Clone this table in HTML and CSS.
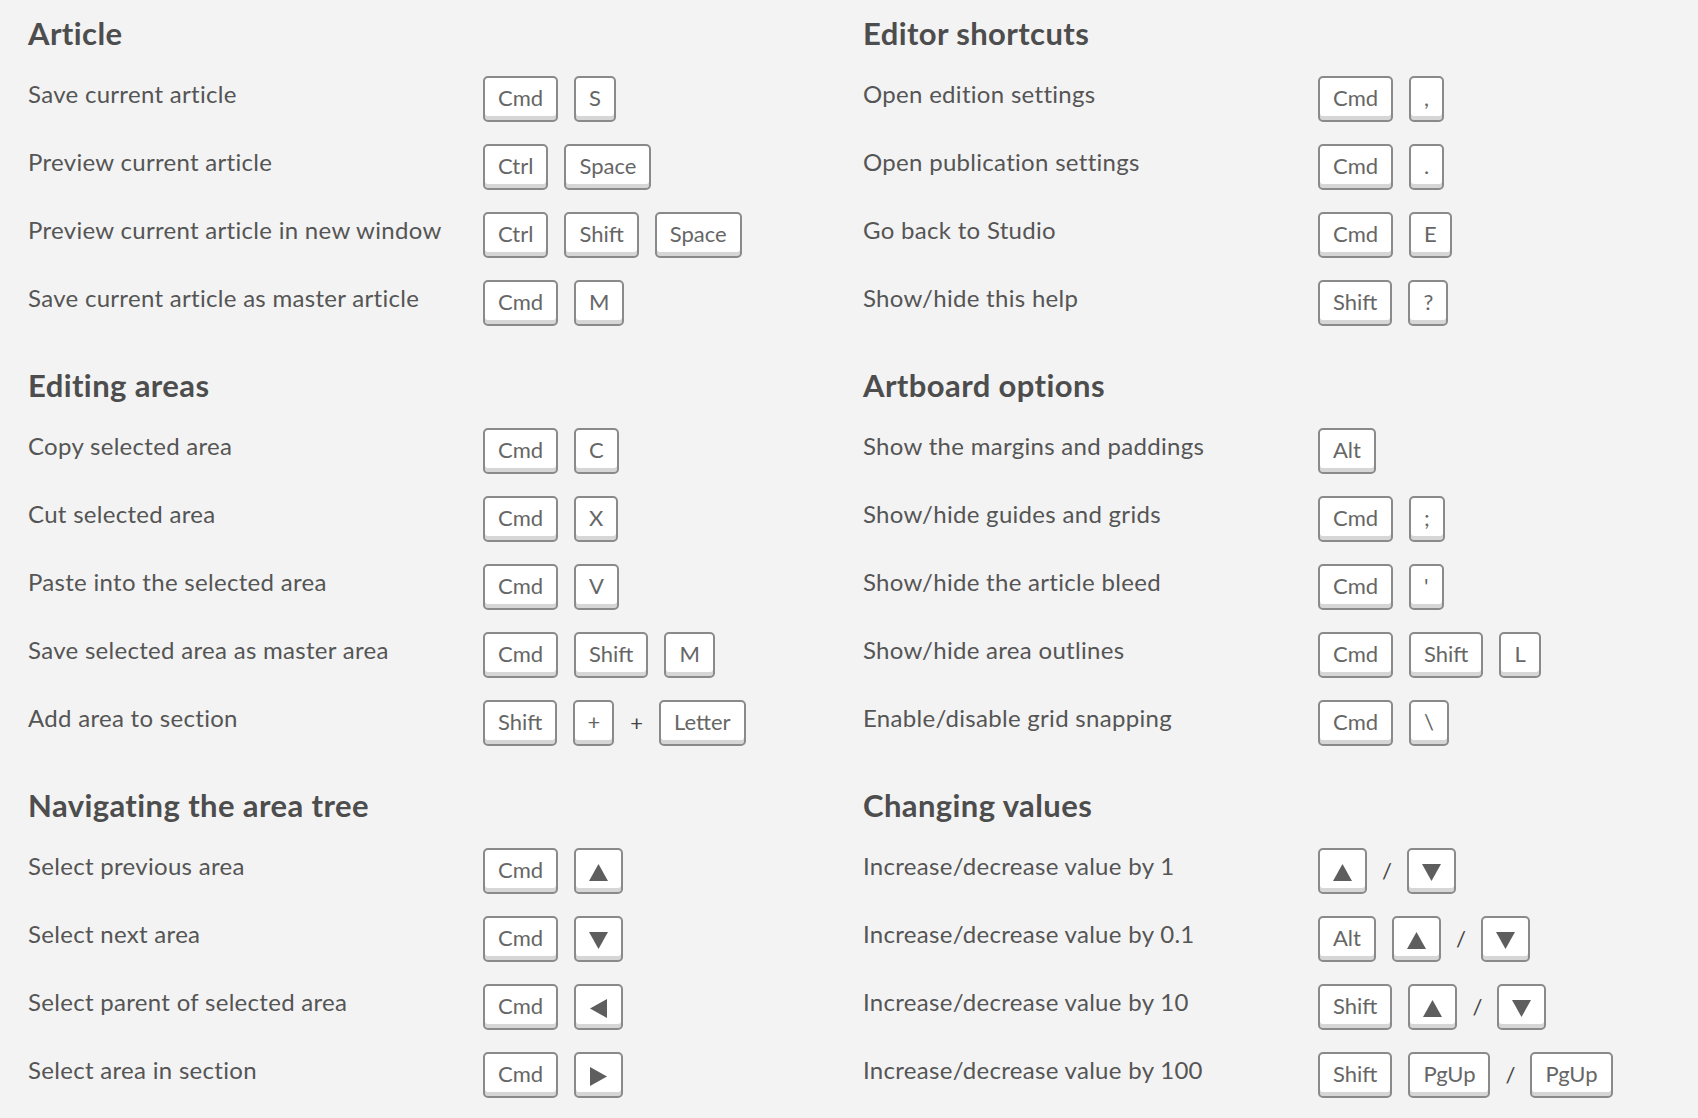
FILE: index.html
```html
<!DOCTYPE html>
<html lang="en">
<head>
<meta charset="utf-8">
<title>Keyboard shortcuts</title>
<link rel="stylesheet" href="styles.css">
</head>
<body>
<main class="sheet">
  <section class="group">
    <h2 class="group-title">Article</h2>
    <div class="row"><span class="label">Save current article</span><span class="keys"><kbd class="key">Cmd</kbd><kbd class="key">S</kbd></span></div>
    <div class="row"><span class="label">Preview current article</span><span class="keys"><kbd class="key">Ctrl</kbd><kbd class="key">Space</kbd></span></div>
    <div class="row"><span class="label">Preview current article in new window</span><span class="keys"><kbd class="key">Ctrl</kbd><kbd class="key">Shift</kbd><kbd class="key">Space</kbd></span></div>
    <div class="row"><span class="label">Save current article as master article</span><span class="keys"><kbd class="key">Cmd</kbd><kbd class="key">M</kbd></span></div>
  </section>

  <section class="group">
    <h2 class="group-title">Editor shortcuts</h2>
    <div class="row"><span class="label">Open edition settings</span><span class="keys"><kbd class="key">Cmd</kbd><kbd class="key">,</kbd></span></div>
    <div class="row"><span class="label">Open publication settings</span><span class="keys"><kbd class="key">Cmd</kbd><kbd class="key">.</kbd></span></div>
    <div class="row"><span class="label">Go back to Studio</span><span class="keys"><kbd class="key">Cmd</kbd><kbd class="key">E</kbd></span></div>
    <div class="row"><span class="label">Show/hide this help</span><span class="keys"><kbd class="key">Shift</kbd><kbd class="key">?</kbd></span></div>
  </section>

  <section class="group">
    <h2 class="group-title">Editing areas</h2>
    <div class="row"><span class="label">Copy selected area</span><span class="keys"><kbd class="key">Cmd</kbd><kbd class="key">C</kbd></span></div>
    <div class="row"><span class="label">Cut selected area</span><span class="keys"><kbd class="key">Cmd</kbd><kbd class="key">X</kbd></span></div>
    <div class="row"><span class="label">Paste into the selected area</span><span class="keys"><kbd class="key">Cmd</kbd><kbd class="key">V</kbd></span></div>
    <div class="row"><span class="label">Save selected area as master area</span><span class="keys"><kbd class="key">Cmd</kbd><kbd class="key">Shift</kbd><kbd class="key">M</kbd></span></div>
    <div class="row"><span class="label">Add area to section</span><span class="keys"><kbd class="key">Shift</kbd><kbd class="key key-narrow">+</kbd><span class="sep">+</span><kbd class="key">Letter</kbd></span></div>
  </section>

  <section class="group">
    <h2 class="group-title">Artboard options</h2>
    <div class="row"><span class="label">Show the margins and paddings</span><span class="keys"><kbd class="key">Alt</kbd></span></div>
    <div class="row"><span class="label">Show/hide guides and grids</span><span class="keys"><kbd class="key">Cmd</kbd><kbd class="key">;</kbd></span></div>
    <div class="row"><span class="label">Show/hide the article bleed</span><span class="keys"><kbd class="key">Cmd</kbd><kbd class="key">'</kbd></span></div>
    <div class="row"><span class="label">Show/hide area outlines</span><span class="keys"><kbd class="key">Cmd</kbd><kbd class="key">Shift</kbd><kbd class="key">L</kbd></span></div>
    <div class="row"><span class="label">Enable/disable grid snapping</span><span class="keys"><kbd class="key">Cmd</kbd><kbd class="key">\</kbd></span></div>
  </section>

  <section class="group">
    <h2 class="group-title">Navigating the area tree</h2>
    <div class="row"><span class="label">Select previous area</span><span class="keys"><kbd class="key">Cmd</kbd><kbd class="key key-arrow"><svg class="tri" viewBox="0 0 19 17"><polygon points="9.5,0 19,17 0,17"/></svg></kbd></span></div>
    <div class="row"><span class="label">Select next area</span><span class="keys"><kbd class="key">Cmd</kbd><kbd class="key key-arrow"><svg class="tri" viewBox="0 0 19 17"><polygon points="0,0 19,0 9.5,17"/></svg></kbd></span></div>
    <div class="row"><span class="label">Select parent of selected area</span><span class="keys"><kbd class="key">Cmd</kbd><kbd class="key key-arrow"><svg class="tri tri-side" viewBox="0 0 17 19"><polygon points="17,0 17,19 0,9.5"/></svg></kbd></span></div>
    <div class="row"><span class="label">Select area in section</span><span class="keys"><kbd class="key">Cmd</kbd><kbd class="key key-arrow"><svg class="tri tri-side" viewBox="0 0 17 19"><polygon points="0,0 17,9.5 0,19"/></svg></kbd></span></div>
  </section>

  <section class="group">
    <h2 class="group-title">Changing values</h2>
    <div class="row"><span class="label">Increase/decrease value by 1</span><span class="keys"><kbd class="key key-arrow"><svg class="tri" viewBox="0 0 19 17"><polygon points="9.5,0 19,17 0,17"/></svg></kbd><span class="sep sep-slash">/</span><kbd class="key key-arrow"><svg class="tri" viewBox="0 0 19 17"><polygon points="0,0 19,0 9.5,17"/></svg></kbd></span></div>
    <div class="row"><span class="label">Increase/decrease value by 0.1</span><span class="keys"><kbd class="key">Alt</kbd><kbd class="key key-arrow"><svg class="tri" viewBox="0 0 19 17"><polygon points="9.5,0 19,17 0,17"/></svg></kbd><span class="sep sep-slash">/</span><kbd class="key key-arrow"><svg class="tri" viewBox="0 0 19 17"><polygon points="0,0 19,0 9.5,17"/></svg></kbd></span></div>
    <div class="row"><span class="label">Increase/decrease value by 10</span><span class="keys"><kbd class="key">Shift</kbd><kbd class="key key-arrow"><svg class="tri" viewBox="0 0 19 17"><polygon points="9.5,0 19,17 0,17"/></svg></kbd><span class="sep sep-slash">/</span><kbd class="key key-arrow"><svg class="tri" viewBox="0 0 19 17"><polygon points="0,0 19,0 9.5,17"/></svg></kbd></span></div>
    <div class="row"><span class="label">Increase/decrease value by 100</span><span class="keys"><kbd class="key">Shift</kbd><kbd class="key">PgUp</kbd><span class="sep sep-slash">/</span><kbd class="key">PgUp</kbd></span></div>
  </section>
</main>
</body>
</html>
```

FILE: styles.css
```css
html, body {
  margin: 0;
  padding: 0;
  background: #f3f3f3;
}

body {
  font-family: Lato, "Open Sans", "Liberation Sans", sans-serif;
  color: #555555;
}

.sheet {
  display: grid;
  grid-template-columns: 835px 835px;
  padding: 18px 0 0 28px;
}

.group {
  margin-bottom: 22px;
}

.group-title {
  margin: 0 0 28px;
  font-size: 31px;
  line-height: 30px;
  letter-spacing: 0.4px;
  font-weight: 700;
  color: #4d4d4d;
}

.row {
  display: flex;
  align-items: flex-start;
  height: 68px;
}

.label {
  flex: none;
  width: 455px;
  padding-top: 6px;
  font-size: 24px;
  line-height: 24px;
  letter-spacing: 0.3px;
  color: #555555;
}

.keys {
  display: flex;
  align-items: center;
  gap: 16px;
}

.key {
  box-sizing: border-box;
  display: block;
  height: 46px;
  padding: 9px 13px 11px;
  border: 2px solid #8a8a8a;
  border-radius: 5px;
  background: #ffffff;
  box-shadow: inset 0 -4px 0 #d6d6d6;
  font-family: Lato, "Open Sans", "Liberation Sans", sans-serif;
  font-size: 22px;
  line-height: 22px;
  color: #666666;
}

.key-narrow {
  padding-left: 12px;
  padding-right: 12px;
}

.key-arrow {
  width: 49px;
  padding: 14px 0 0;
  display: flex;
  justify-content: center;
  align-items: flex-start;
}

.tri {
  display: block;
  width: 19px;
  height: 17px;
  fill: #5e5e5e;
}

.tri-side {
  width: 17px;
  height: 19px;
  margin-top: -1px;
}

.sep {
  font-size: 22px;
  line-height: 22px;
  color: #444444;
}

.sep-slash {
  margin: 0 -1px;
}
```
